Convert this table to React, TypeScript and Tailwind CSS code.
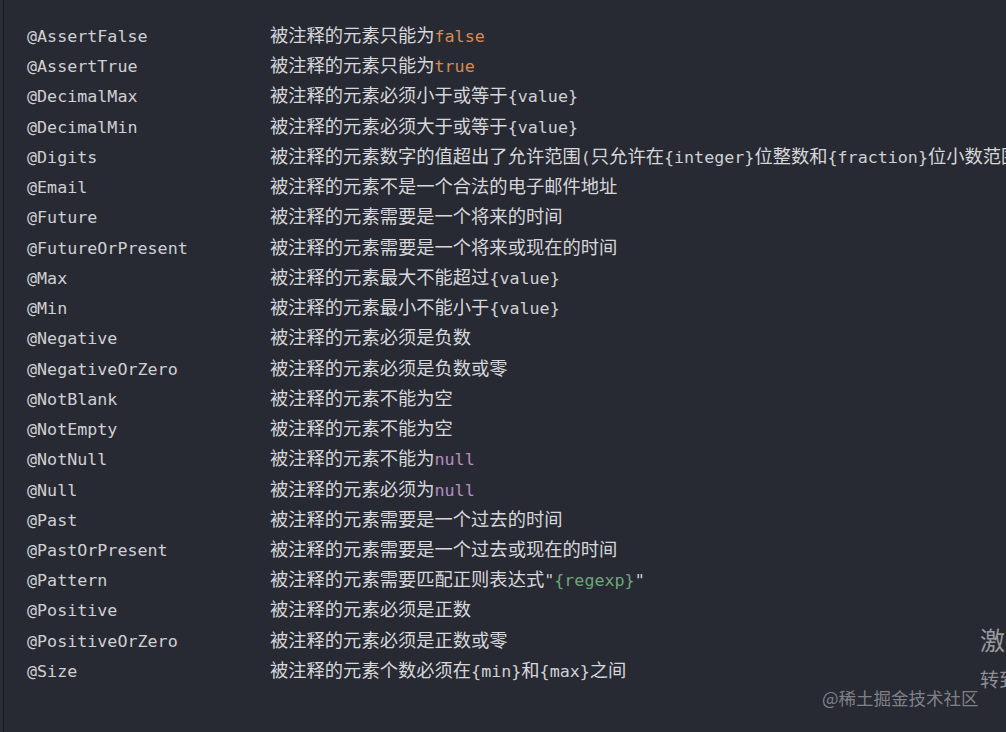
type Seg = { t: string; c?: string };

const ORANGE = "text-[#d98a4f]";
const PURPLE = "text-[#b48ec4]";
const GREEN = "text-[#6fa57a]";

const rows: { name: string; desc: Seg[] }[] = [
  { name: "@AssertFalse", desc: [{ t: "被注释的元素只能为" }, { t: "false", c: ORANGE }] },
  { name: "@AssertTrue", desc: [{ t: "被注释的元素只能为" }, { t: "true", c: ORANGE }] },
  { name: "@DecimalMax", desc: [{ t: "被注释的元素必须小于或等于{value}" }] },
  { name: "@DecimalMin", desc: [{ t: "被注释的元素必须大于或等于{value}" }] },
  {
    name: "@Digits",
    desc: [{ t: "被注释的元素数字的值超出了允许范围(只允许在{integer}位整数和{fraction}位小数范围内)" }],
  },
  { name: "@Email", desc: [{ t: "被注释的元素不是一个合法的电子邮件地址" }] },
  { name: "@Future", desc: [{ t: "被注释的元素需要是一个将来的时间" }] },
  { name: "@FutureOrPresent", desc: [{ t: "被注释的元素需要是一个将来或现在的时间" }] },
  { name: "@Max", desc: [{ t: "被注释的元素最大不能超过{value}" }] },
  { name: "@Min", desc: [{ t: "被注释的元素最小不能小于{value}" }] },
  { name: "@Negative", desc: [{ t: "被注释的元素必须是负数" }] },
  { name: "@NegativeOrZero", desc: [{ t: "被注释的元素必须是负数或零" }] },
  { name: "@NotBlank", desc: [{ t: "被注释的元素不能为空" }] },
  { name: "@NotEmpty", desc: [{ t: "被注释的元素不能为空" }] },
  { name: "@NotNull", desc: [{ t: "被注释的元素不能为" }, { t: "null", c: PURPLE }] },
  { name: "@Null", desc: [{ t: "被注释的元素必须为" }, { t: "null", c: PURPLE }] },
  { name: "@Past", desc: [{ t: "被注释的元素需要是一个过去的时间" }] },
  { name: "@PastOrPresent", desc: [{ t: "被注释的元素需要是一个过去或现在的时间" }] },
  {
    name: "@Pattern",
    desc: [{ t: "被注释的元素需要匹配正则表达式\"" }, { t: "{regexp}", c: GREEN }, { t: "\"" }],
  },
  { name: "@Positive", desc: [{ t: "被注释的元素必须是正数" }] },
  { name: "@PositiveOrZero", desc: [{ t: "被注释的元素必须是正数或零" }] },
  { name: "@Size", desc: [{ t: "被注释的元素个数必须在{min}和{max}之间" }] },
];

// CJK runs get their own (larger) size so mono and CJK widths both match
function Mixed({ text }: { text: string }) {
  const parts = text.split(/([\u3000-\u9fff\uff00-\uffef]+)/);
  return (
    <>
      {parts.map((p, i) =>
        /[\u3000-\u9fff]/.test(p) ? (
          <span key={i} className="text-[18.3px] leading-none font-['Noto_Sans_CJK_SC',sans-serif] text-[#d6d7da]">
            {p}
          </span>
        ) : (
          <span key={i}>{p}</span>
        ),
      )}
    </>
  );
}

export default function App() {
  return (
    <div className="relative h-[732px] w-[1006px] overflow-hidden bg-[#282a33] font-['DejaVu_Sans_Mono','Noto_Sans_CJK_SC',monospace] text-[16.7px] text-[#cfd0d3]">
      <div className="flex h-full">
        <div className="w-[3px] shrink-0 bg-[#2b2d35]" />
        <div className="w-px shrink-0 bg-[#1b1c21]" />
        <div className="grid min-w-0 flex-1 grid-cols-[243px_1fr] content-start pl-[23px] pt-[21px] whitespace-nowrap">
          {rows.map((r) => (
            <div key={r.name} className="contents">
              <div className="h-[30.24px] leading-[30.24px]">{r.name}</div>
              <div className="h-[30.24px] leading-[30.24px]">
                {r.desc.map((s, i) =>
                  s.c ? (
                    <span key={i} className={s.c}>
                      {s.t}
                    </span>
                  ) : (
                    <Mixed key={i} text={s.t} />
                  ),
                )}
              </div>
            </div>
          ))}
        </div>
      </div>

      {/* watermark */}
      <div className="absolute left-[980px] top-[624px] whitespace-nowrap font-['Noto_Sans_CJK_SC',sans-serif] text-[25px] leading-[30px] text-[#9a9ba0]">
        激活
      </div>
      <div className="absolute left-[980px] top-[666px] whitespace-nowrap font-['Noto_Sans_CJK_SC',sans-serif] text-[19px] leading-[26px] text-[#8f9095]">
        转到
      </div>
      <div className="absolute left-[822px] top-[686px] whitespace-nowrap font-['Noto_Sans_CJK_SC',sans-serif] text-[17.5px] leading-[24px] text-[#8b8d93]/90">
        @稀土掘金技术社区
      </div>
    </div>
  );
}
